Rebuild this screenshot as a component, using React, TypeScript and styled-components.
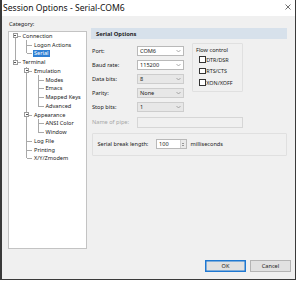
import React from "react";
import styled, { createGlobalStyle, css } from "styled-components";

const GlobalStyle = createGlobalStyle`
  html, body { margin: 0; padding: 0; background: #ffffff; }
  body { font-family: "Noto Sans", "Open Sans", sans-serif; color: #1a1a1a; }
  * { box-sizing: border-box; }
`;

const Window = styled.div`
  width: 296px;
  height: 280px;
  display: flex;
  flex-direction: column;
  background: #f0f0f0;
  border-left: 2px solid #3a3a3a;
  border-right: 1px solid #3a3a3a;
  border-bottom: 1px solid #3a3a3a;
`;

const TitleBar = styled.div`
  height: 16px;
  background: #ffffff;
  display: flex;
  align-items: center;
  justify-content: space-between;
  padding: 0 4px 0 1px;
  font-size: 8.6px;
  color: #111;
`;

const CloseGlyph = styled.svg`
  width: 6px;
  height: 6px;
  margin-top: -2px;
`;

const Main = styled.div`
  display: grid;
  grid-template-columns: 79px 196px;
  column-gap: 4px;
  padding: 4px 0 0 6px;
`;

const LeftColumn = styled.div`
  display: flex;
  flex-direction: column;
`;

const SmallLabel = styled.div<{ $muted?: boolean }>`
  font-size: 5.6px;
  line-height: 8px;
  height: 8px;
  color: ${(p) => (p.$muted ? "#a3a3a3" : "#1a1a1a")};
  white-space: nowrap;
`;

const CategoryLabel = styled(SmallLabel)`
  padding-left: 1px;
`;

const Tree = styled.div`
  margin-top: 2.5px;
  height: 218.5px;
  background: #ffffff;
  border: 1px solid #c3c3c3;
  display: flex;
  flex-direction: column;
`;

const TreeRow = styled.div`
  height: 8.75px;
  display: flex;
  align-items: stretch;
  font-size: 5.6px;
  white-space: nowrap;
`;

const lineColor = "#a9a9a9";

const GuideCell = styled.span<{ $v: "full" | "top" | "bottom" | "none"; $h?: boolean }>`
  position: relative;
  width: 11.5px;
  flex: 0 0 11.5px;
  &::before {
    content: "";
    position: absolute;
    left: 5.5px;
    width: 1px;
    background: ${lineColor};
    ${(p) =>
      p.$v === "full"
        ? css`top: 0; bottom: 0;`
        : p.$v === "top"
        ? css`top: 0; height: 50%;`
        : p.$v === "bottom"
        ? css`top: 50%; bottom: 0;`
        : css`display: none;`}
  }
  &::after {
    content: "";
    display: ${(p) => (p.$h ? "block" : "none")};
    position: absolute;
    left: 6px;
    right: 0;
    top: 50%;
    height: 1px;
    background: ${lineColor};
  }
`;

const Expander = styled.span`
  position: absolute;
  left: 3.5px;
  top: 50%;
  width: 5px;
  height: 5px;
  margin-top: -2.5px;
  background: #ffffff;
  border: 1px solid #9a9a9a;
  z-index: 1;
  &::after {
    content: "";
    position: absolute;
    left: 0.5px;
    right: 0.5px;
    top: 1px;
    height: 1px;
    background: #555;
  }
`;

const NodeText = styled.span<{ $selected?: boolean }>`
  align-self: center;
  margin-left: 0.5px;
  padding: 0.5px 1.5px;
  line-height: 6px;
  background: ${(p) => (p.$selected ? "#2f7fd3" : "transparent")};
  color: ${(p) => (p.$selected ? "#ffffff" : "#1a1a1a")};
`;

const RightColumn = styled.div`
  display: flex;
  flex-direction: column;
  padding-top: 8px;
`;

const SectionHeader = styled.div`
  height: 11px;
  background: #d7e1eb;
  display: flex;
  align-items: center;
  padding-left: 5px;
  font-size: 5.8px;
  font-weight: 700;
  color: #1e1e1e;
`;

const FormGrid = styled.div`
  margin-top: 6.7px;
  display: grid;
  grid-template-columns: 46px 47px 8px 51px;
  grid-template-rows: repeat(5, 10px) 11px;
  row-gap: 4.2px;
`;

const FieldLabel = styled.div<{ $muted?: boolean }>`
  grid-column: 1;
  display: flex;
  align-items: center;
  padding-left: 1px;
  font-size: 5.6px;
  white-space: nowrap;
  color: ${(p) => (p.$muted ? "#a6a6a6" : "#1a1a1a")};
`;

const Select = styled.div<{ $readOnly?: boolean }>`
  grid-column: 2;
  display: flex;
  align-items: center;
  justify-content: space-between;
  padding: 0 2px 0 2px;
  font-size: 5.6px;
  background: ${(p) => (p.$readOnly ? "#e7e7e7" : "#ffffff")};
  border: 1px solid ${(p) => (p.$readOnly ? "#cdcdcd" : "#b9b9b9")};
`;

const Chevron = styled.svg`
  width: 5px;
  height: 4px;
`;

const PipeInput = styled.div`
  grid-column: 2 / 5;
  background: #f0f0f0;
  border: 1px solid #d6d6d6;
`;

const FlowGroup = styled.div`
  grid-column: 4;
  grid-row: 1 / span 4;
  align-self: start;
  margin-top: -3px;
  height: 49px;
  border: 1px solid #e0e0e0;
  border-radius: 1px;
  padding: 3px 0 0 3px;
  display: flex;
  flex-direction: column;
`;

const GroupTitle = styled.div`
  font-size: 5.6px;
  line-height: 6px;
  color: #1a1a1a;
`;

const CheckList = styled.div`
  margin-top: 1.3px;
  margin-left: 3px;
  display: flex;
  flex-direction: column;
`;

const CheckItem = styled.label`
  height: 11.5px;
  display: flex;
  align-items: center;
  font-size: 5.4px;
  color: #1a1a1a;
`;

const CheckBox = styled.span`
  width: 6.5px;
  height: 6.5px;
  border: 1px solid #333333;
  background: #ffffff;
  margin-right: 0.8px;
`;

const BreakGroup = styled.div`
  margin-top: 5px;
  margin-left: 1px;
  width: 195px;
  height: 23px;
  border: 1px solid #e0e0e0;
  border-radius: 1px;
  display: flex;
  align-items: center;
  padding-left: 4.5px;
  font-size: 5.6px;
`;

const BreakLabel = styled.span`
  width: 58px;
  white-space: nowrap;
`;

const SpinBox = styled.div`
  width: 31px;
  height: 9.5px;
  display: flex;
  border: 1px solid #b9b9b9;
  background: #ffffff;
`;

const SpinValue = styled.span`
  flex: 1;
  display: flex;
  align-items: center;
  padding-left: 2.5px;
`;

const SpinButtons = styled.span`
  width: 6px;
  background: #e9e9e9;
  border-left: 1px solid #d0d0d0;
  display: flex;
  flex-direction: column;
  align-items: center;
  justify-content: center;
  gap: 1px;
`;

const SpinArrow = styled.span<{ $up?: boolean }>`
  width: 0;
  height: 0;
  border-left: 1.5px solid transparent;
  border-right: 1.5px solid transparent;
  ${(p) =>
    p.$up
      ? css`border-bottom: 1.5px solid #444;`
      : css`border-top: 1.5px solid #444;`}
`;

const Unit = styled.span`
  margin-left: 4px;
`;

const Footer = styled.div`
  margin-top: auto;
  display: flex;
  justify-content: flex-end;
  gap: 4px;
  padding: 0 4px 7px 0;
`;

const Button = styled.button<{ $primary?: boolean }>`
  width: 41px;
  height: 12px;
  padding: 0;
  font-family: inherit;
  font-size: 5.6px;
  color: #1a1a1a;
  background: #e1e1e1;
  border: 1px solid ${(p) => (p.$primary ? "#1f78d1" : "#b4b4b4")};
  ${(p) => p.$primary && css`box-shadow: inset 0 0 0 0.5px #1f78d1;`}
`;

type Node = {
  label: string;
  level: number;
  children?: boolean;
  last: boolean;
  anc: boolean[];
  first?: boolean;
  selected?: boolean;
};

const nodes: Node[] = [
  { label: "Connection", level: 0, children: true, last: false, anc: [], first: true },
  { label: "Logon Actions", level: 1, last: false, anc: [true] },
  { label: "Serial", level: 1, last: true, anc: [true], selected: true },
  { label: "Terminal", level: 0, children: true, last: true, anc: [] },
  { label: "Emulation", level: 1, children: true, last: false, anc: [false] },
  { label: "Modes", level: 2, last: false, anc: [false, true] },
  { label: "Emacs", level: 2, last: false, anc: [false, true] },
  { label: "Mapped Keys", level: 2, last: false, anc: [false, true] },
  { label: "Advanced", level: 2, last: true, anc: [false, true] },
  { label: "Appearance", level: 1, children: true, last: false, anc: [false] },
  { label: "ANSI Color", level: 2, last: false, anc: [false, true] },
  { label: "Window", level: 2, last: true, anc: [false, true] },
  { label: "Log File", level: 1, last: false, anc: [false] },
  { label: "Printing", level: 1, last: false, anc: [false] },
  { label: "X/Y/Zmodem", level: 1, last: true, anc: [false] },
];

const TreeNode: React.FC<{ node: Node }> = ({ node }) => {
  const own = node.first ? "bottom" : node.last ? "top" : "full";
  return (
    <TreeRow>
      {node.anc.map((cont, i) => (
        <GuideCell key={i} $v={cont ? "full" : "none"} />
      ))}
      <GuideCell $v={own} $h>
        {node.children && <Expander />}
      </GuideCell>
      <NodeText $selected={node.selected}>{node.label}</NodeText>
    </TreeRow>
  );
};

const ChevronIcon = () => (
  <Chevron viewBox="0 0 5 4">
    <path d="M0.5 1 L2.5 3 L4.5 1" fill="none" stroke="#8a8a8a" strokeWidth="0.7" />
  </Chevron>
);

const fields: { label: string; value: string; readOnly?: boolean }[] = [
  { label: "Port:", value: "COM6" },
  { label: "Baud rate:", value: "115200" },
  { label: "Data bits:", value: "8", readOnly: true },
  { label: "Parity:", value: "None", readOnly: true },
  { label: "Stop bits:", value: "1", readOnly: true },
];

export default function App() {
  return (
    <>
      <GlobalStyle />
      <Window>
        <TitleBar>
          <span>Session Options - Serial-COM6</span>
          <CloseGlyph viewBox="0 0 6 6">
            <path d="M0.5 0.5 L5.5 5.5 M5.5 0.5 L0.5 5.5" stroke="#333" strokeWidth="0.7" />
          </CloseGlyph>
        </TitleBar>
        <Main>
          <LeftColumn>
            <CategoryLabel>Category:</CategoryLabel>
            <Tree>
              {nodes.map((n) => (
                <TreeNode key={n.label} node={n} />
              ))}
            </Tree>
          </LeftColumn>
          <RightColumn>
            <SectionHeader>Serial Options</SectionHeader>
            <FormGrid>
              {fields.map((f) => (
                <React.Fragment key={f.label}>
                  <FieldLabel>{f.label}</FieldLabel>
                  <Select $readOnly={f.readOnly}>
                    <span>{f.value}</span>
                    <ChevronIcon />
                  </Select>
                </React.Fragment>
              ))}
              <FlowGroup>
                <GroupTitle>Flow control</GroupTitle>
                <CheckList>
                  {["DTR/DSR", "RTS/CTS", "XON/XOFF"].map((c) => (
                    <CheckItem key={c}>
                      <CheckBox />
                      {c}
                    </CheckItem>
                  ))}
                </CheckList>
              </FlowGroup>
              <FieldLabel $muted>Name of pipe:</FieldLabel>
              <PipeInput />
            </FormGrid>
            <BreakGroup>
              <BreakLabel>Serial break length:</BreakLabel>
              <SpinBox>
                <SpinValue>100</SpinValue>
                <SpinButtons>
                  <SpinArrow $up />
                  <SpinArrow />
                </SpinButtons>
              </SpinBox>
              <Unit>milliseconds</Unit>
            </BreakGroup>
          </RightColumn>
        </Main>
        <Footer>
          <Button $primary>OK</Button>
          <Button>Cancel</Button>
        </Footer>
      </Window>
    </>
  );
}
